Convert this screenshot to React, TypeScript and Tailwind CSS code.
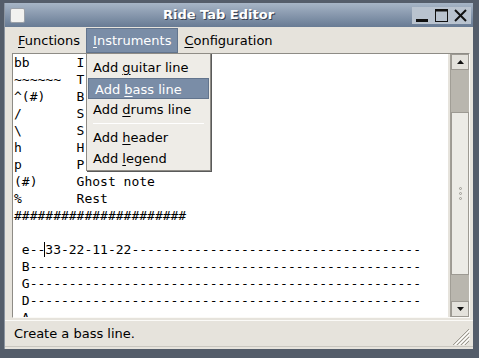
import React from "react";

const mono = "font-['DejaVu_Sans_Mono',monospace]";

function U({ children }: { children: React.ReactNode }) {
  return <span className="underline underline-offset-2 decoration-1">{children}</span>;
}

// the menu covers everything past column 9 on the first lines
const legend = [
  "bb      I",
  "~~~~~~  T",
  "^(#)    B",
  "/       S",
  "\\       S",
  "h       H",
  "p       P",
  "(#)     Ghost note",
  "%       Rest",
  "######################",
  "",
];

const strings = [
  { name: "B", rest: "-".repeat(50) },
  { name: "G", rest: "-".repeat(50) },
  { name: "D", rest: "-".repeat(50) },
  { name: "A", rest: "-".repeat(50) },
];

function TitleButton({ kind }: { kind: "min" | "max" | "close" }) {
  return (
    <div className="w-[15px] h-[15px] flex items-center justify-center">
      <svg width="15" height="15" viewBox="0 0 15 15">
        {kind === "min" && <rect x="1" y="11" width="12" height="3" fill="#111" />}
        {kind === "max" && (
          <g fill="none" stroke="#111">
            <rect x="1.5" y="1.5" width="12" height="12" strokeWidth="1" />
            <line x1="1" y1="2.5" x2="14" y2="2.5" strokeWidth="2" />
          </g>
        )}
        {kind === "close" && (
          <g stroke="#111" strokeWidth="2">
            <line x1="2" y1="2" x2="13" y2="13" />
            <line x1="13" y1="2" x2="2" y2="13" />
          </g>
        )}
      </svg>
    </div>
  );
}

export default function App() {
  return (
    <div className="w-[479px] h-[358px] overflow-hidden bg-[#545d6a] pt-[3px] pl-[4px] pr-[6px] font-['DejaVu_Sans',sans-serif] text-[13px] text-black">
      <div className="relative flex flex-col border-l border-[#8b94a0]">
        {/* title bar */}
        <div className="h-[24px] flex items-center bg-gradient-to-b from-[#a7b5c6] to-[#687b94] pl-[5px] pr-[2px]">
          <div className="w-[15px] h-[15px] rounded-[2px] bg-[#f2f2f0] border border-[#9aa0a8]" />
          <div className="flex-1 text-center font-bold text-white text-[13px] [text-shadow:1px_1px_0_#36404f]">
            Ride Tab Editor
          </div>
          <div className="flex gap-[4px] items-center bg-[#b9c3cf] px-[3px] py-[1px]">
            <TitleButton kind="min" />
            <TitleButton kind="max" />
            <TitleButton kind="close" />
          </div>
        </div>

        <div className="bg-[#e6e3dc] flex flex-col">
          {/* menu bar */}
          <div className="h-[26px] flex items-end pl-[7px]">
            <div className="h-[25px] px-[6px] flex items-center">
              <span><U>F</U>unctions</span>
            </div>
            <div className="h-[25px] px-[6px] flex items-center bg-[#7a8da7] text-white border border-[#62748d]">
              <span><U>I</U>nstruments</span>
            </div>
            <div className="h-[25px] px-[6px] flex items-center">
              <span><U>C</U>onfiguration</span>
            </div>
          </div>

          {/* editor + scrollbar */}
          <div className="ml-[7px] mr-[3px] h-[265px] flex border border-t-[#8e8c86] border-l-[#8e8c86] border-b-[#fbfaf7] border-r-[#fbfaf7]">
            <div className={`flex-1 bg-white pl-[1px] overflow-hidden ${mono} text-[13px] leading-[17px] whitespace-pre`}>
              {legend.map((l, i) => (
                <div key={i} className="h-[17px]">{l}</div>
              ))}
              <div className="h-[17px]">
                {" e--"}
                <span className="border-l border-black -ml-[1px]" />
                {"33-22-11-22" + "-".repeat(37)}
              </div>
              {strings.map((s) => (
                <div key={s.name} className="h-[17px]">{" " + s.name + s.rest}</div>
              ))}
            </div>
            {/* scrollbar */}
            <div className="w-[19px] ml-[2px] bg-[#b9b6ae] border-l border-[#a19e96] flex flex-col">
              <div className="h-[16px] bg-[#e4e2dc] border border-[#9d9a93] flex items-center justify-center">
                <svg width="7" height="4" viewBox="0 0 7 4"><path d="M0 4 L3.5 0 L7 4 Z" fill="#111" /></svg>
              </div>
              <div className="h-[42px]" />
              <div className="h-[163px] bg-[#ecebe6] border border-[#9d9a93] flex items-center justify-center">
                <div className="flex flex-col gap-[2px]">
                  <div className="w-[3px] h-[3px] rounded-full border border-[#9c9a94]" />
                  <div className="w-[3px] h-[3px] rounded-full border border-[#9c9a94]" />
                  <div className="w-[3px] h-[3px] rounded-full border border-[#9c9a94]" />
                </div>
              </div>
              <div className="flex-1" />
              <div className="h-[16px] bg-[#e4e2dc] border border-[#9d9a93] flex items-center justify-center">
                <svg width="7" height="4" viewBox="0 0 7 4"><path d="M0 0 L3.5 4 L7 0 Z" fill="#111" /></svg>
              </div>
            </div>
          </div>

          {/* status bar */}
          <div className="mt-[2px] h-[26px] flex items-center border-t border-[#fbfaf7] pl-[9px] pr-[2px]">
            <span className="flex-1">Create a bass line.</span>
            <svg width="26" height="18" viewBox="0 0 26 18" className="self-end mb-[1px]">
              <g stroke="#9c9991" strokeWidth="1">
                <line x1="24" y1="2" x2="8" y2="18" />
                <line x1="24" y1="6" x2="12" y2="18" />
                <line x1="24" y1="10" x2="16" y2="18" />
                <line x1="24" y1="14" x2="20" y2="18" />
              </g>
              <g stroke="#ffffff" strokeWidth="1">
                <line x1="25" y1="3" x2="10" y2="18" />
                <line x1="25" y1="7" x2="14" y2="18" />
                <line x1="25" y1="11" x2="18" y2="18" />
              </g>
            </svg>
          </div>
          <div className="h-[3px] border-t border-[#c9c6bf]" />
        </div>

        {/* Instruments dropdown */}
        <div className="absolute left-[81px] top-[50px] w-[125px] bg-[#eeece7] border border-[#8f8c86] shadow-[1px_1px_0_#5a5a5a] pt-[3px] pb-[1px]">
          <div className="h-[21px] leading-[21px] pl-[6px]">Add <U>g</U>uitar line</div>
          <div className="h-[21px] leading-[21px] pl-[6px] mx-[1px] bg-[#7a8da7] text-white border border-[#62748d]">Add <U>b</U>ass line</div>
          <div className="h-[21px] leading-[21px] pl-[6px]">Add <U>d</U>rums line</div>
          <div className="h-[7px] flex items-center px-[6px]">
            <div className="h-[1px] w-full bg-[#b3b0a9] border-b border-white" />
          </div>
          <div className="h-[21px] leading-[21px] pl-[6px]">Add <U>h</U>eader</div>
          <div className="h-[21px] leading-[21px] pl-[6px]">Add <U>l</U>egend</div>
        </div>
      </div>
    </div>
  );
}
